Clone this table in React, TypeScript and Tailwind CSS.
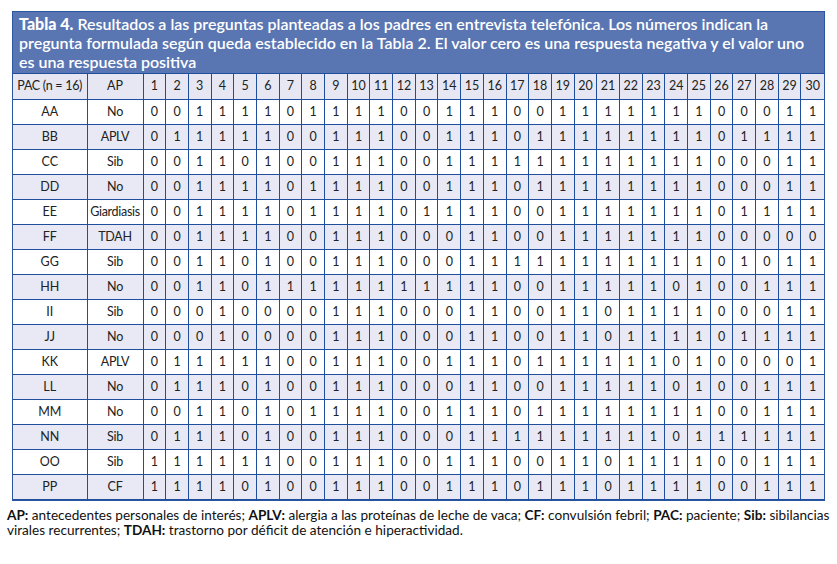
const rows: [string, string, string][] = [
  ["AA", "No", "001111011110" + "011100111111100011"],
  ["BB", "APLV", "011111001110" + "011101111111101111"],
  ["CC", "Sib", "001101001110" + "011111111111100011"],
  ["DD", "No", "001111011110" + "011101111111100011"],
  ["EE", "Giardiasis", "001111011110" + "111100111111101111"],
  ["FF", "TDAH", "001111001110" + "001100111111100000"],
  ["GG", "Sib", "001101001110" + "001111111111101011"],
  ["HH", "No", "001101111111" + "111100111110100111"],
  ["II", "Sib", "000100001110" + "001100110111100011"],
  ["JJ", "No", "000100001110" + "001100110111101111"],
  ["KK", "APLV", "011111001110" + "011101111110100001"],
  ["LL", "No", "011101001110" + "001100111110100111"],
  ["MM", "No", "001101011110" + "011101111111100111"],
  ["NN", "Sib", "011101001110" + "001111111110111111"],
  ["OO", "Sib", "111111001110" + "011100110111100111"],
  ["PP", "CF", "111101001110" + "011101110111100111"],
];

const cols = Array.from({ length: 30 }, (_, i) => i + 1);

const lato = { fontFamily: 'Lato, "Noto Sans", "Liberation Sans", sans-serif' };

export default function App() {
  return (
    <div className="min-h-screen bg-white pt-[11px]" style={lato}>
      <div className="ml-[12px] w-[813px] border border-[#2a55a0]">
        <div className="h-[61px] bg-[#5a76b2] pl-[6px] pt-[1.5px] text-[16px] leading-[19.3px] font-semibold text-white">
          <div className="whitespace-nowrap">
            <b>Tabla 4.</b> Resultados a las preguntas planteadas a los padres en entrevista telefónica. Los números indican la
          </div>
          <div className="whitespace-nowrap">
            pregunta formulada según queda establecido en la Tabla 2. El valor cero es una respuesta negativa y el valor uno
          </div>
          <div className="whitespace-nowrap">es una respuesta positiva</div>
        </div>
        <table className="w-full table-fixed border-collapse text-[12.5px] text-[#222]">
          <colgroup>
            <col className="w-[74px]" />
            <col className="w-[56px]" />
            {cols.map((c) => (
              <col key={c} />
            ))}
          </colgroup>
          <thead>
            <tr className="h-[26px] bg-[#e6e7f3]">
              <th className="border border-[#1f4f9c] border-l-0 font-normal tracking-[-0.3px]">PAC (n = 16)</th>
              <th className="border border-[#1f4f9c] font-normal">AP</th>
              {cols.map((c) => (
                <th key={c} className="border border-[#1f4f9c] font-normal last:border-r-0">
                  {c}
                </th>
              ))}
            </tr>
          </thead>
          <tbody>
            {rows.map(([pac, ap, vals], i) => (
              <tr key={pac} className={`h-[25px] ${i % 2 === 1 ? "bg-[#e8e9f4]" : "bg-white"}`}>
                <td className="border border-[#1f4f9c] border-l-0 text-center">{pac}</td>
                <td className="border border-[#1f4f9c] text-center tracking-[-0.3px]">{ap}</td>
                {vals.split("").map((v, j) => (
                  <td key={j} className="border border-[#1f4f9c] text-center last:border-r-0">
                    {v}
                  </td>
                ))}
              </tr>
            ))}
          </tbody>
        </table>
      </div>
      <p className="ml-[7px] mt-[7px] whitespace-nowrap text-[13.6px] leading-[15px] text-[#111]">
        <b>AP:</b> antecedentes personales de interés; <b>APLV:</b> alergia a las proteínas de leche de vaca; <b>CF:</b>{" "}
        convulsión febril; <b>PAC:</b> paciente; <b>Sib:</b> sibilancias
        <br />
        virales recurrentes; <b>TDAH:</b> trastorno por déficit de atención e hiperactividad.
      </p>
    </div>
  );
}
